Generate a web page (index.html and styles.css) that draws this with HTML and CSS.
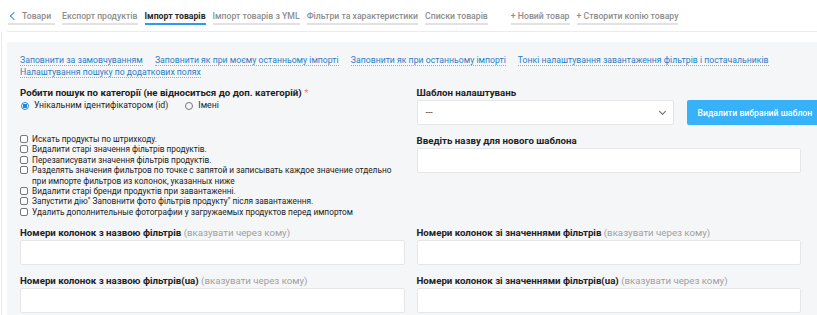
FILE: index.html
```html
<!DOCTYPE html>
<html lang="uk">
<head>
<meta charset="UTF-8">
<title>Імпорт товарів</title>
<link rel="stylesheet" href="styles.css">
</head>
<body>

<div class="tabs">
    <a class="tab back" href="#"><span class="chev"></span>Товари</a>
    <a class="tab" href="#">Експорт продуктів</a>
    <a class="tab active" href="#">Імпорт товарів</a>
    <a class="tab" href="#">Імпорт товарів з YML</a>
    <a class="tab" href="#">Фільтри та характеристики</a>
    <a class="tab" href="#">Списки товарів</a>
    <a class="tab spaced" href="#">+ Новий товар</a>
    <a class="tab" href="#">+ Створити копію товару</a>
</div>

<div class="frame">
    <div class="panel">
        <div class="links">
            <a href="#">Заповнити за замовчуванням</a>
            <a href="#">Заповнити як при моєму останньому імпорті</a>
            <a href="#">Заповнити як при останньому імпорті</a>
            <a href="#">Тонкі налаштування завантаження фільтрів і постачальників</a>
            <a href="#">Налаштування пошуку по додаткових полях</a>
        </div>

        <div class="grid">
            <div class="field">
                <div class="label">Робити пошук по категорії (не відноситься до доп. категорій) <span class="req">*</span></div>
                <div class="radios">
                    <label class="radio"><span class="dot checked"></span>Унікальним ідентифікатором (id)</label>
                    <label class="radio"><span class="dot"></span>Імені</label>
                </div>
            </div>
            <div class="field">
                <div class="label">Шаблон налаштувань</div>
                <div class="template-row">
                    <div class="select">---<span class="caret"></span></div>
                    <button class="btn">Видалити вибраний шаблон</button>
                </div>
            </div>

            <div class="checks">
                <label class="check"><span class="box"></span>Искать продукты по штрихкоду.</label>
                <label class="check"><span class="box"></span>Видалити старі значення фільтрів продуктів.</label>
                <label class="check"><span class="box"></span>Перезаписувати значення фільтрів продуктів.</label>
                <label class="check"><span class="box"></span>Разделять значения фильтров по точке с запятой и записывать каждое значение отдельно при импорте фильтров из колонок, указанных ниже</label>
                <label class="check"><span class="box"></span>Видалити старі бренди продуктів при завантаженні.</label>
                <label class="check"><span class="box"></span>Запустити дію" Заповнити фото фільтрів продукту" після завантаження.</label>
                <label class="check"><span class="box"></span>Удалить дополнительные фотографии у загружаемых продуктов перед импортом</label>
            </div>
            <div class="field">
                <div class="label">Введіть назву для нового шаблона</div>
                <div class="input"></div>
            </div>

            <div class="field">
                <div class="label">Номери колонок з назвою фільтрів <span class="hint">(вказувати через кому)</span></div>
                <div class="input"></div>
            </div>
            <div class="field">
                <div class="label">Номери колонок зі значеннями фільтрів <span class="hint">(вказувати через кому)</span></div>
                <div class="input"></div>
            </div>

            <div class="field">
                <div class="label">Номери колонок з назвою фільтрів(ua) <span class="hint">(вказувати через кому)</span></div>
                <div class="input"></div>
            </div>
            <div class="field">
                <div class="label">Номери колонок зі значеннями фільтрів(ua) <span class="hint">(вказувати через кому)</span></div>
                <div class="input"></div>
            </div>
        </div>
    </div>
</div>

</body>
</html>
```

FILE: styles.css
```css
body {
    margin: 0;
    background-color: #fff;
    color: #222;
    font-family: Roboto, "Noto Sans", sans-serif;
    overflow: hidden;
}
a {
    text-decoration: none;
}
.tabs {
    display: flex;
    gap: 7px;
    height: 32px;
    margin-left: 7px;
    padding-left: 1px;
    border-bottom: 1px solid #ececec;
    box-sizing: border-box;
    padding-top: 9px;
}
.tab {
    display: flex;
    align-items: center;
    height: 13px;
    padding-bottom: 1px;
    border-bottom: 2px solid #e2e2e2;
    color: #8d8d8d;
    font-size: 8.7px;
    font-weight: 500;
    white-space: nowrap;
}
.tab.active {
    color: #2a2a2a;
    font-weight: 700;
    border-bottom-color: #2b9af3;
}
.tab.spaced {
    margin-left: 16px;
}
.back {
    width: 47px;
}
.chev {
    width: 5px;
    height: 5px;
    border-left: 1.5px solid #2b8ee8;
    border-bottom: 1.5px solid #2b8ee8;
    transform: rotate(45deg);
    margin: 0 5px 0 3px;
}
.frame {
    border-left: 1px solid #e8e8e8;
    margin-left: 1px;
    padding: 10px 0 0 5px;
}
.panel {
    background-color: #f5f6f8;
    padding: 12px 16px 20px 13px;
    min-height: 300px;
}
.links {
    font-size: 8.7px;
    line-height: 12px;
    margin-bottom: 8px;
}
.links a {
    color: #2c7cc4;
    border-bottom: 1px dotted #7fb0de;
    margin-right: 10px;
    white-space: nowrap;
}
.grid {
    display: grid;
    grid-template-columns: minmax(0, 1fr) minmax(0, 1fr);
    column-gap: 12px;
    row-gap: 9px;
}
.label {
    font-size: 9.7px;
    line-height: 13px;
    font-weight: 700;
    color: #222;
    margin-bottom: 1px;
    white-space: nowrap;
}
.req {
    color: #f08080;
    font-weight: 400;
}
.hint {
    color: #a0a0a0;
    font-weight: 400;
}
.radios {
    display: flex;
    gap: 16px;
    font-size: 8.7px;
    line-height: 11px;
    color: #222;
}
.radio {
    display: flex;
    align-items: center;
}
.dot {
    width: 6px;
    height: 6px;
    border: 1px solid #777;
    border-radius: 50%;
    margin-right: 5px;
    margin-left: 1px;
}
.dot.checked {
    border-color: #1e88e5;
    background: radial-gradient(circle, #1e88e5 55%, #fff 60%);
}
.template-row {
    display: flex;
    gap: 13px;
}
.select {
    position: relative;
    flex: none;
    width: 257px;
    height: 25px;
    box-sizing: border-box;
    background-color: #fff;
    border: 1px solid #e6e6e6;
    border-radius: 2px;
    padding-left: 8px;
    font-size: 8.7px;
    line-height: 23px;
    color: #333;
}
.caret {
    position: absolute;
    right: 8px;
    top: 8px;
    width: 4px;
    height: 4px;
    border-right: 1px solid #666;
    border-bottom: 1px solid #666;
    transform: rotate(45deg);
}
.btn {
    flex: none;
    width: 136px;
    height: 25px;
    border: none;
    border-radius: 2px;
    background-color: #37b1f8;
    color: #fff;
    font-family: Roboto, sans-serif;
    font-size: 8.7px;
    font-weight: 500;
    padding: 0 0 0 11px;
    text-align: left;
    white-space: nowrap;
}
.checks {
    font-size: 8.3px;
    line-height: 10.4px;
    color: #222;
}
.check {
    display: block;
    padding-left: 12px;
    position: relative;
}
.box {
    position: absolute;
    left: 0;
    top: 1px;
    width: 6px;
    height: 6px;
    border: 1px solid #777;
    border-radius: 2px;
    background-color: #fff;
}
.input {
    height: 25px;
    box-sizing: border-box;
    background-color: #fff;
    border: 1px solid #e6e6e6;
    border-radius: 2px;
}
```
